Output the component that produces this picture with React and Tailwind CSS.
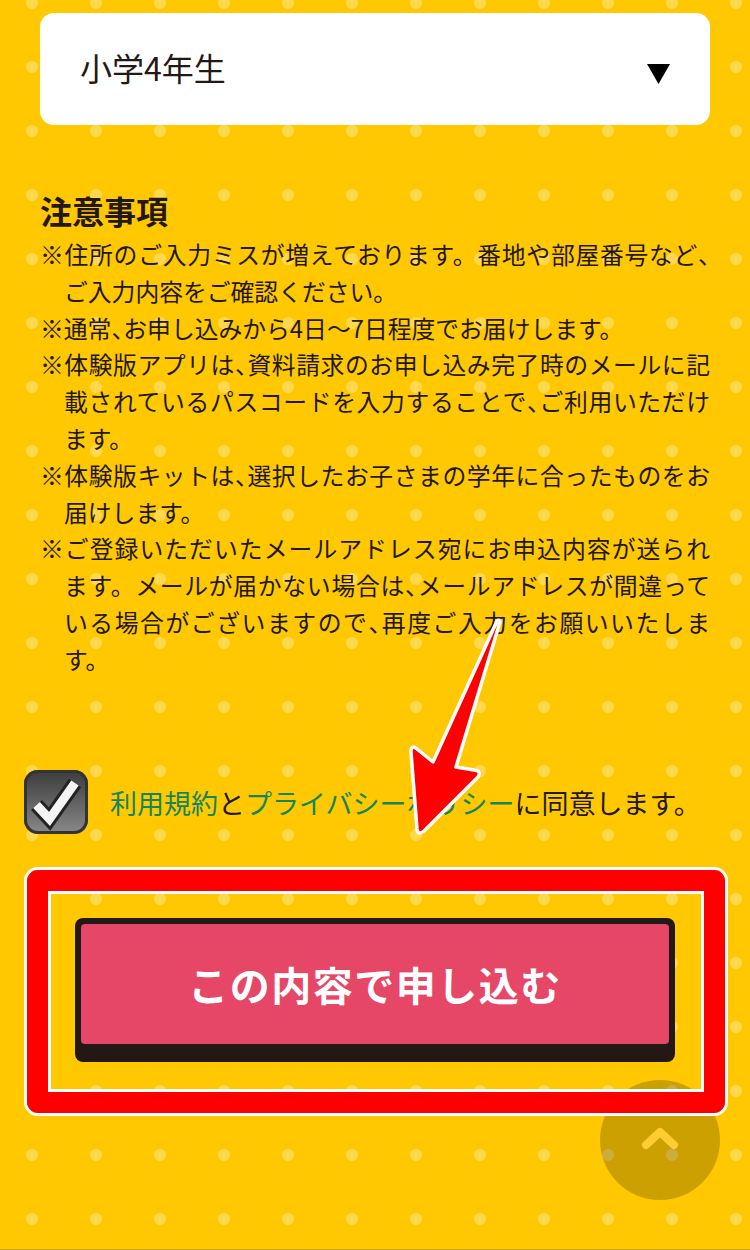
const notes = [
  ['※住所のご入力ミスが増えております。番地や部屋番号など、', 'ご入力内容をご確認ください。'],
  ['※通常、お申し込みから4日〜7日程度でお届けします。'],
  ['※体験版アプリは、資料請求のお申し込み完了時のメールに記', '載されているパスコードを入力することで、ご利用いただけ', 'ます。'],
  ['※体験版キットは、選択したお子さまの学年に合ったものをお', '届けします。'],
  ['※ご登録いただいたメールアドレス宛にお申込内容が送られ', 'ます。メールが届かない場合は、メールアドレスが間違って', 'いる場合がございますので、再度ご入力をお願いいたしま', 'す。'],
];

// 読点だけ詰める
function Line({ text }) {
  return text.split(/(、)/).map((part, i) =>
    part === '、'
      ? <span key={i} className="[font-feature-settings:'halt']">、</span>
      : part
  );
}

function CheckBox() {
  return (
    <div className="h-16 w-16 shrink-0 rounded-[14px] bg-gradient-to-b from-[#3c3c3c] to-[#8a8a8a] shadow-[inset_0_0_0_3px_#333333]">
      <svg width="64" height="64" viewBox="0 0 64 64">
        <path d="M12.5 35 L25.5 49 L51 13" fill="none" stroke="#222222" strokeWidth="15" />
        <path d="M12.5 35 L25.5 49 L51 13" fill="none" stroke="#f4f4f4" strokeWidth="9" />
      </svg>
    </div>
  );
}

export default function App() {
  return (
    <div className="relative h-[1250px] w-[750px] overflow-hidden border-b border-[#c8a200] bg-[#ffc800] bg-[radial-gradient(circle,#ffd84f_5.5px,transparent_6.5px)] bg-[length:64px_64px] bg-[position:0_-29px] pt-[13px] text-[#231815] [font-family:'Noto_Sans_CJK_JP',sans-serif]">
      <div className="mx-10 flex h-[112px] items-center justify-between rounded-[14px] bg-white px-10">
        <span className="-mt-1 text-[32px]">小学4年生</span>
        <svg className="mt-[10px]" width="23" height="20" viewBox="0 0 23 20">
          <path d="M0 0 H23 L11.5 20 Z" fill="#000000" />
        </svg>
      </div>

      <h2 className="mx-10 mt-[65px] text-[32px] font-bold leading-[40px]">注意事項</h2>
      <ul className="mx-10 mt-[6px] text-[23.8px] leading-[36.8px]">
        {notes.map(lines => (
          <li key={lines[0]}>
            {lines.map((line, i) => (
              <span
                key={line}
                className={
                  (i > 0 ? 'ml-6 ' : '') +
                  (i < lines.length - 1 ? '[text-align-last:justify] ' : '') +
                  'block whitespace-nowrap'
                }
              >
                <Line text={line} />
              </span>
            ))}
          </li>
        ))}
      </ul>

      <div className="ml-6 mt-[92px] flex items-center gap-[22px]">
        <CheckBox />
        <p className="mt-1 text-[27px]">
          <a className="text-[#12865c]">利用規約</a>と<a className="text-[#12865c]">プライバシーポリシー</a>に同意します。
        </p>
      </div>

      <button className="mx-[75px] mt-[84px] flex h-[144px] w-[600px] items-start rounded-lg bg-[#231815] p-[6px]">
        <span className="flex h-[120px] w-full items-center justify-center rounded-sm bg-[#e64767] text-[40px] font-bold tracking-[1.5px] text-white">
          この内容で申し込む
        </span>
      </button>

      {/* scroll to top */}
      <div className="absolute left-[600px] top-[1080px] flex h-[120px] w-[120px] items-center justify-center rounded-full bg-black/20">
        <svg width="40" height="40" viewBox="0 0 40 40">
          <path d="M6 25 L20 12 L34 25" fill="none" stroke="#ffcc33" strokeWidth="8" strokeLinecap="round" strokeLinejoin="round" />
        </svg>
      </div>

      {/* annotation */}
      <div className="absolute left-6 top-[867px] h-[249px] w-[704px] rounded-[14px] border-[3px] border-white">
        <div className="h-full w-full rounded-[11px] border-[21px] border-[#ff0000]">
          <div className="h-full w-full border-[3px] border-white" />
        </div>
      </div>
      <svg className="absolute left-0 top-0" width="750" height="1250" viewBox="0 0 750 1250">
        <path
          d="M497 621 Q499 619 500 622 L456 767 L474 770 Q482 771 478 777 L424 831 Q418 836 417 829 L411 752 Q411 744 417 749 L433 762 Z"
          fill="#ff0000"
          stroke="#ffffff"
          strokeWidth="3.5"
          strokeLinejoin="round"
        />
      </svg>
    </div>
  );
}
